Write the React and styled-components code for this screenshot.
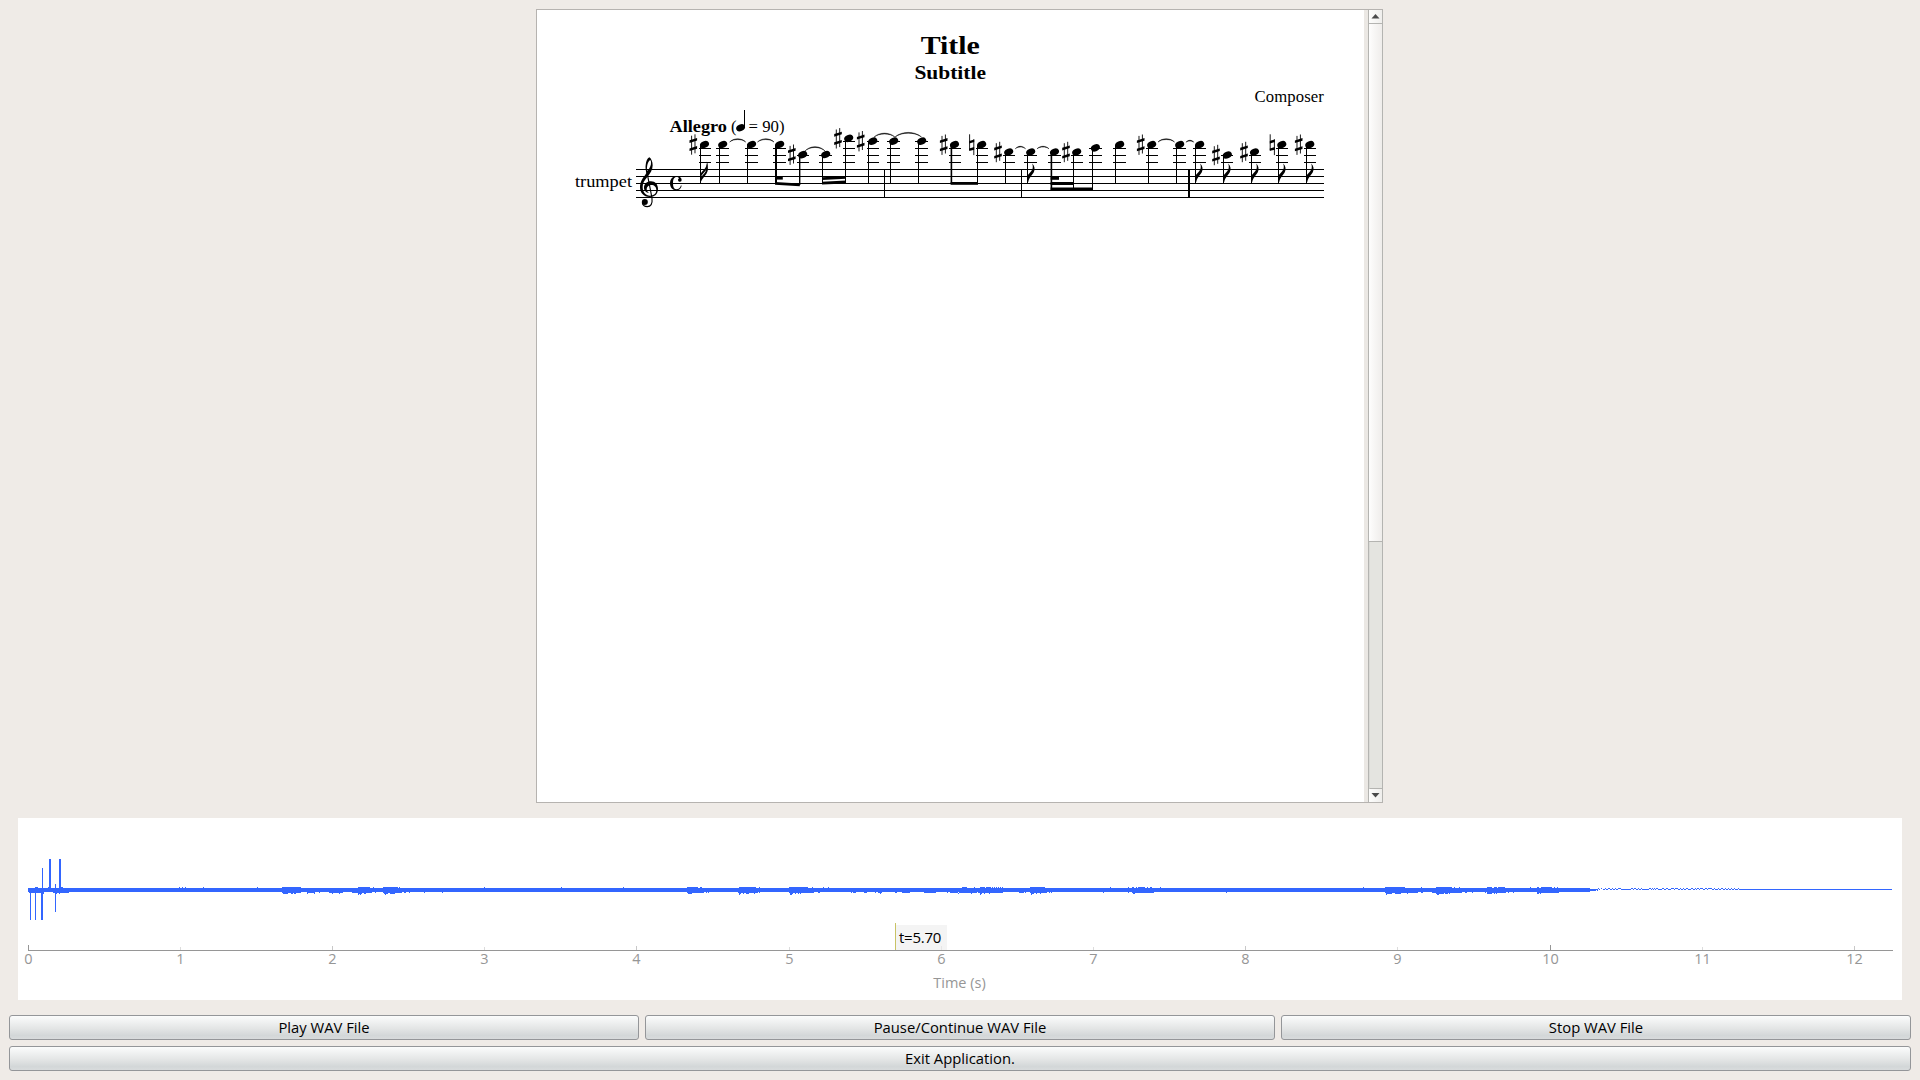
import React from "react";
import styled, { createGlobalStyle } from "styled-components";

const Global = createGlobalStyle`
  body { margin: 0; background: #efebe7; overflow: hidden; }
  * { box-sizing: border-box; }
`;

const ui = `"Open Sans", "Noto Sans", sans-serif`;
const serif = `"Liberation Serif", "Times New Roman", serif`;

const Window = styled.div`
  width: 1920px;
  height: 1080px;
  padding: 9px 9px 9px 9px;
  display: flex;
  flex-direction: column;
  align-items: center;
  background: #efebe7;
  font-family: ${ui};
`;

const ScrollArea = styled.div`
  width: 847px;
  height: 794px;
  margin-right: 1px;
  display: flex;
  border: 1px solid #b6b3b0;
  border-right: 0;
`;

const Sheet = styled.div`
  width: 827px;
  padding-top: 22px;
  background: #fff;
  display: flex;
  flex-direction: column;
  align-items: center;
  color: #000;
  font-family: ${serif};
`;

const Title = styled.h1`
  margin: 0;
  font-size: 26px;
  line-height: 28px;
  transform: translateX(-0.5px) scaleX(1.15);
`;

const Subtitle = styled.h2`
  margin: 1px 0 0;
  font-size: 19px;
  line-height: 24px;
  transform: translateX(-0.5px) scaleX(1.13);
`;

const Composer = styled.div`
  align-self: flex-end;
  margin: 2px 40px 0 0;
  font-size: 16.7px;
  line-height: 20px;
  letter-spacing: 0.1px;
`;

const Score = styled.svg`
  display: block;
  width: 827px;
  height: 110px;
`;

const Gap = styled.div`
  width: 4px;
  background: #ebe8e4;
`;

const ScrollBar = styled.div`
  width: 15px;
  border: solid #b4b4b1;
  border-width: 0 1px;
  display: flex;
  flex-direction: column;
  background: #e4e4e0;
`;

const Arrow = styled.div`
  height: 13px;
  display: flex;
  align-items: center;
  justify-content: center;
  background: linear-gradient(90deg, #fdfdfc, #efeeec);
`;

const Thumb = styled.div`
  height: 519px;
  border: solid #b4b4b1;
  border-width: 1px 0;
  background: linear-gradient(90deg, #fefefe, #f9f8f7 30%, #efedeb);
`;

const Track = styled.div`
  flex: 1;
  border-bottom: 1px solid #b4b4b1;
  border-left: 1px solid #dadad6;
`;

const Plot = styled.div`
  width: 1884px;
  height: 182px;
  margin-top: 15px;
  background: #fff;
  position: relative;
`;

const Chart = styled.svg`
  display: block;
  width: 1884px;
  height: 182px;
`;

const CursorTag = styled.div`
  position: absolute;
  left: 877px;
  top: 105px;
  width: 52px;
  height: 27px;
  display: flex;
  align-items: flex-end;
  border-left: 1px solid #c9c365;
`;

const CursorText = styled.span`
  width: 51px;
  height: 25px;
  padding-left: 3px;
  line-height: 25px;
  font-size: 15px;
  letter-spacing: -0.25px;
  color: #000;
  background: rgba(240, 240, 240, 0.75);
`;

const Buttons = styled.div`
  width: 1902px;
  margin-top: 15px;
  display: grid;
  grid-template-columns: repeat(3, 630px);
  gap: 6px;
`;

const Button = styled.button`
  height: 25px;
  padding: 0;
  grid-column: span ${(p) => p.$span || 1};
  border: 1px solid #949699;
  border-radius: 3px;
  background: linear-gradient(#fbfcfc, #e3e5e5 55%, #d3d7d8 85%, #d8dbdc);
  font-family: ${ui};
  font-size: 14.8px;
  line-height: 21px;
  color: #000;
`;

/* ---------- score ---------- */

const STAFF = [169, 176, 183, 190, 197];

const NOTES = [
  { x: 704.5, y: 144.5, stem: 700, acc: "#", ax: 693.3, flag: 2 },
  { x: 722.7, y: 144.5, stem: 719 },
  { x: 751.6, y: 144.5, stem: 747 },
  { x: 779.7, y: 144.5, stem: 775, w: 2 },
  { x: 802.7, y: 154.7, stem: 799, w: 1.4, acc: "#", ax: 791.8, end: 185 },
  { x: 825.7, y: 154.5, stem: 822, end: 184 },
  { x: 848.7, y: 138.3, stem: 845, acc: "#", ax: 838 },
  { x: 872.8, y: 141.2, stem: 868, acc: "#", ax: 860.7 },
  { x: 893.7, y: 141.2, stem: 890 },
  { x: 921.7, y: 141.2, stem: 918 },
  { x: 954.5, y: 144.7, stem: 950.6, w: 1.6, acc: "#", ax: 943.7 },
  { x: 981.7, y: 144.7, stem: 977, acc: "n", ax: 971.7 },
  { x: 1008.7, y: 152, stem: 1005, acc: "#", ax: 998 },
  { x: 1030.7, y: 152, stem: 1027, flag: 1 },
  { x: 1054.5, y: 152, stem: 1050.6, w: 1.6, end: 190 },
  { x: 1076.7, y: 152, stem: 1073, acc: "#", ax: 1066, end: 190 },
  { x: 1095.4, y: 147.8, stem: 1092, end: 190 },
  { x: 1119.7, y: 144.7, stem: 1115 },
  { x: 1151.7, y: 144.7, stem: 1148, acc: "#", ax: 1140.7 },
  { x: 1179.7, y: 144.7, stem: 1176 },
  { x: 1199.7, y: 144.7, stem: 1195, flag: 1 },
  { x: 1227.3, y: 155, stem: 1223, acc: "#", ax: 1216, flag: 1 },
  { x: 1254.5, y: 152, stem: 1251, acc: "#", ax: 1244, flag: 1 },
  { x: 1281.8, y: 144.7, stem: 1278, acc: "n", ax: 1272.3, flag: 1 },
  { x: 1309.8, y: 144.7, stem: 1306, acc: "#", ax: 1298.7, flag: 1 },
];

const TIES = [
  [729.7, 745.7, 142, 138.8],
  [757.5, 774, 142, 138.8],
  [804.5, 825.5, 151.5, 146.7],
  [874, 895, 137.2, 133.2],
  [895, 921.5, 137, 132.4],
  [1015.3, 1025.5, 148.8, 146.3],
  [1037, 1049, 148.8, 146.3],
  [1158, 1174.5, 142, 138.8],
  [1186, 1193.8, 142.2, 140.3],
];

const BEAMS = [
  "775,182 799.8,183.4 799.8,186.2 775,184.8",
  "775,177 782.8,177 782.8,179.6 775,179.6",
  "822,181.8 846,180.6 846,183.4 822,184.6",
  "822,177.2 846,176 846,178.8 822,180",
  "950.6,182 978,182 978,184.8 950.6,184.8",
  "1050.6,187.4 1093,187.4 1093,190.6 1050.6,190.6",
  "1050.6,182 1074,182 1074,185 1050.6,185",
  "1050.6,177 1059,177 1059,179.8 1050.6,179.8",
];

const Head = ({ x, y }) => (
  <ellipse cx={x} cy={y} rx="4.7" ry="3.4" transform={`rotate(-25 ${x} ${y})`} />
);

const Sharp = ({ x, y }) => (
  <g transform={`translate(${x} ${y})`}>
    <path d="M-1.7 -8.8V10.2M1.7 -10.2V8.8" stroke="#000" strokeWidth="0.9" />
    <path d="M-3.8 -4.2L3.8 -6.6V-4L-3.8 -1.6ZM-3.8 4L3.8 1.6V4.2L-3.8 6.6Z" />
  </g>
);

const Natural = ({ x, y }) => (
  <g transform={`translate(${x} ${y})`}>
    <path d="M-2.1 -10.4V5.4M2.1 -5.4V10.4" stroke="#000" strokeWidth="0.9" />
    <path d="M-2.5 -3.8L2.5 -5.2V-2.6L-2.5 -1.2ZM-2.5 3.8L2.5 2.4V5L-2.5 6.2Z" />
  </g>
);

const ledgersFor = (y) =>
  [141, 148, 155, 162].filter((l) => l > y - 2.2);

const FLAG =
  "M0.5 -7C1.5 -10.5 7.8 -12 5.2 -19.5C7.8 -17 8.2 -13.5 6.8 -10.8C5.2 -7.8 2.4 -6 1.2 -1H0.5Z";

const Note = ({ n }) => (
  <g>
    {ledgersFor(n.y).map((l) => (
      <rect
        key={l}
        x={Math.round(n.x - (n.acc ? 6 : 6.5))}
        y={l}
        width={n.acc ? 12 : 13}
        height="1"
        shapeRendering="crispEdges"
      />
    ))}
    <rect x={n.stem} y={n.y} width={n.w || 1} height={(n.end || 183.5) - n.y} />
    <Head x={n.x} y={n.y} />
    {n.acc === "#" && <Sharp x={n.ax} y={n.y} />}
    {n.acc === "n" && <Natural x={n.ax} y={n.y} />}
    {n.flag === 1 && <path d={FLAG} transform={`translate(${n.stem} 183)`} />}
    {n.flag === 2 && (
      <>
        <path
          d="M0.5 -2C1 -6 8 -8 6.6 -17C8.2 -14 8.6 -11 6.6 -7.6C4.8 -4.6 2.4 -3 0.8 1H0Z"
          transform={`translate(${n.stem} 181)`}
        />
        <path
          d="M0.5 -2C1 -5.5 7.6 -7.5 6.8 -15C8.2 -12.5 8.2 -9.600 6.4 -6.8C4.8 -4.6 2.4 -3 0.8 0.4H0Z"
          transform={`translate(${n.stem} 176.5)`}
        />
      </>
    )}
  </g>
);

const Tie = ({ t: [a, b, y, top] }) => {
  const k = y + ((top - y) * 4) / 3;
  const d = (b - a) * 0.25;
  return (
    <path
      d={`M${a} ${y}C${a + d} ${k} ${b - d} ${k} ${b} ${y}C${b - d} ${k + 1} ${a + d} ${k + 1} ${a} ${y}Z`}
      stroke="#000"
      strokeWidth="0.45"
    />
  );
};

const Clef = () => (
  <g transform="translate(560 90) scale(0.33333)">
    <path
      fillRule="evenodd"
      d="M268 202C273 205 278 214 278 226C278 240 271 251 262 261C253 271 248 279 248 291C248 306 257 317 270 317C281 317 289 311 289 300C289 291 283 285 274 285C266 285 260 290 260 297C260 302 263 306 268 309C258 308 252 301 252 293C252 282 261 274 273 274C286 274 294 284 294 297C294 312 284 321 269 321C251 321 240 308 240 292C240 276 247 265 256 254C258 251 259 250 259 249C257 240 256 232 257 225C258 213 262 205 268 202ZM270 211C264 215 260 226 261 244C269 236 274 226 273 217C273 213 272 211 270 211Z"
    />
    <path
      d="M260 240C263 262 273 304 276 326C278 342 272 350 262 350C254 350 248 345 247 338"
      fill="none"
      stroke="#000"
      strokeWidth="3.4"
    />
    <circle cx="254.500" cy="336" r="9" fill="#000" />
  </g>
);

const CommonTime = () => (
  <g transform="translate(560 90) scale(0.33333)">
    <path d="M365 287C363 296 357 301 349 301C337 301 330 292 330 280C330 267 338 259 350 259C359 259 365 264 365 270A5.500 5.500 0 1 1 357 265C356 262 353 261 350 261C342 261 339 268 339 280C339 292 342 298 350 298C356 298 361 294 363 286Z" />
  </g>
);

const ScoreLine = () => (
  <Score viewBox="537 107 827 110">
    <g fontFamily={serif} fill="#000">
      <text x="575" y="186.500" fontSize="17.500" textLength="57" lengthAdjust="spacingAndGlyphs">trumpet</text>
      <text x="669.500" y="131.500" fontSize="17" fontWeight="bold" textLength="57.500" lengthAdjust="spacingAndGlyphs">Allegro</text>
      <text x="731" y="131.500" fontSize="16.500">(</text>
      <text x="748.500" y="131.500" fontSize="16.500" textLength="36" lengthAdjust="spacingAndGlyphs">= 90)</text>
    </g>
    <ellipse cx="740.600" cy="127.800" rx="4.600" ry="3.300" transform="rotate(-25 740.6 127.8)" />
    <rect x="744" y="110" width="1" height="17" />
    <g shapeRendering="crispEdges">
      {STAFF.map((y) => (
        <rect key={y} x="636" y={y} width="688" height="1" />
      ))}
      <rect x="884" y="169" width="1" height="29" />
      <rect x="1021" y="169" width="1" height="29" />
      <rect x="1188" y="169" width="2" height="29" />
    </g>
    <Clef />
    <CommonTime />
    {NOTES.map((n) => (
      <Note key={n.x} n={n} />
    ))}
    {BEAMS.map((b) => (
      <polygon key={b} points={b} />
    ))}
    {TIES.map((t) => (
      <Tie key={t[0]} t={t} />
    ))}
  </Score>
);

/* ---------- waveform ---------- */

/* rows of pixel runs: [y, [start, end], ...] */
const RUNS = [
  [887, [35, 38], [48, 51], [59, 63], [179, 180], [182, 183], [185, 186], [203, 204], [257, 258],
    [282, 301], [358, 370], [373, 374], [383, 398], [399, 400], [484, 485], [561, 562], [623, 624],
    [687, 698], [700, 702], [739, 756], [759, 760], [789, 808], [812, 813], [823, 824], [828, 829],
    [962, 967], [974, 975], [980, 985], [986, 991], [992, 993], [994, 995], [996, 997], [998, 999],
    [1000, 1001], [1002, 1003], [1030, 1045], [1110, 1111], [1128, 1129], [1132, 1134], [1136, 1137],
    [1138, 1145], [1147, 1148], [1150, 1152], [1160, 1161], [1363, 1364], [1385, 1405], [1421, 1422],
    [1436, 1452], [1454, 1455], [1459, 1460], [1487, 1492], [1494, 1497], [1498, 1505], [1530, 1531],
    [1537, 1539], [1541, 1552], [1554, 1555], [1557, 1558]],
  [892, [29, 44], [53, 69], [282, 301], [307, 315], [319, 320], [329, 343], [352, 372], [375, 376],
    [383, 402], [404, 406], [409, 410], [424, 425], [442, 443], [687, 704], [706, 707], [708, 709],
    [738, 758], [759, 760], [789, 814], [818, 820], [851, 852], [853, 856], [864, 867], [875, 876],
    [878, 882], [895, 897], [902, 910], [924, 936], [947, 948], [950, 958], [959, 977], [978, 1003],
    [1019, 1024], [1025, 1026], [1030, 1047], [1049, 1050], [1051, 1052], [1103, 1104], [1128, 1129],
    [1132, 1154], [1226, 1227], [1385, 1418], [1421, 1423], [1432, 1462], [1465, 1467], [1472, 1473],
    [1485, 1486], [1487, 1506], [1508, 1509], [1513, 1514], [1537, 1559]],
  [893, [43, 44], [56, 57], [59, 60], [283, 288], [291, 293], [294, 296], [307, 308], [314, 315],
    [332, 333], [339, 340], [358, 362], [364, 366], [384, 388], [390, 395], [688, 692], [739, 741],
    [743, 744], [746, 749], [754, 755], [790, 793], [795, 796], [798, 799], [800, 801], [880, 881],
    [958, 959], [971, 972], [980, 982], [984, 985], [989, 990], [1031, 1034], [1036, 1037], [1040, 1041],
    [1133, 1135], [1386, 1392], [1395, 1401], [1407, 1408], [1436, 1444], [1445, 1448], [1449, 1450],
    [1487, 1492], [1494, 1495], [1496, 1497], [1537, 1539], [1540, 1541]],
  [894, [358, 359], [360, 361], [385, 386], [739, 740], [790, 792], [980, 981], [1031, 1032], [1386, 1387], [1437, 1439]],
  [888, [1598, 1599], [1601, 1602], [1605, 1606], [1608, 1610], [1612, 1613], [1615, 1616], [1618, 1621],
    [1631, 1633], [1634, 1636], [1638, 1639], [1641, 1642], [1649, 1651], [1652, 1653], [1654, 1655],
    [1656, 1658], [1662, 1664], [1666, 1668], [1671, 1674], [1675, 1678], [1680, 1681], [1683, 1684],
    [1686, 1688], [1691, 1693], [1695, 1696], [1697, 1699], [1700, 1703], [1705, 1707], [1708, 1712],
    [1714, 1715], [1718, 1719], [1721, 1723], [1725, 1726], [1728, 1729], [1731, 1732], [1734, 1735], [1738, 1739]],
  [889, [1590, 1598], [1599, 1600], [1603, 1605], [1606, 1608], [1610, 1612], [1613, 1615], [1616, 1618],
    [1621, 1631], [1633, 1634], [1636, 1638], [1639, 1641], [1642, 1649], [1651, 1652], [1653, 1654],
    [1655, 1656], [1658, 1662], [1664, 1666], [1668, 1671], [1674, 1675], [1678, 1680], [1681, 1683],
    [1684, 1686], [1688, 1691], [1693, 1695], [1696, 1697], [1699, 1700], [1703, 1705], [1707, 1708],
    [1712, 1714], [1715, 1718], [1719, 1721], [1723, 1725], [1726, 1728], [1729, 1731], [1732, 1734],
    [1735, 1738], [1739, 1892]],
  [890, [1590, 1596], [1597, 1598]],
];

const SPIKES = [
  [30, 891, 1, 29], [35, 891, 1, 29], [41, 891, 2, 29], [42, 868, 1, 22],
  [49, 859, 2, 30], [59, 859, 2, 30], [55, 884, 1, 28],
];

const tickX = (n) => 28 + Math.floor(n * 152.2);

const Wave = () => (
  <Chart viewBox="18 818 1884 182">
    <g shapeRendering="crispEdges" fill="#3366ff">
      <rect x="28" y="888" width="1562" height="4" />
      {SPIKES.map(([x, y, w, h]) => (
        <rect key={`${x}-${y}`} x={x} y={y} width={w} height={h} />
      ))}
      {RUNS.map(([y, ...runs]) =>
        runs.map(([a, b]) => <rect key={`${y}-${a}`} x={a} y={y} width={b - a} height="1" />)
      )}
    </g>
    <g shapeRendering="crispEdges">
      {Array.from({ length: 13 }, (_, n) => {
        const h = n % 10 === 0 ? 5 : n % 2 === 0 ? 4 : 3;
        const c = n % 10 === 0 ? "#969696" : n % 2 === 0 ? "#c8c8c8" : "#dcdcdc";
        return <rect key={n} x={tickX(n)} y={950 - h} width="1" height={h} fill={c} />;
      })}
      <rect x="28" y="950" width="1865" height="1" fill="#969696" />
    </g>
    <g fontFamily={ui} fontSize="14.500" fill="#969696" textAnchor="middle">
      {Array.from({ length: 13 }, (_, n) => (
        <text key={n} x={tickX(n) + 0.5} y="964">{n}</text>
      ))}
      <text x="959.500" y="988" textLength="52.500" lengthAdjust="spacingAndGlyphs">Time (s)</text>
    </g>
  </Chart>
);

export default function App() {
  return (
    <Window>
      <Global />
      <ScrollArea>
        <Sheet>
          <Title>Title</Title>
          <Subtitle>Subtitle</Subtitle>
          <Composer>Composer</Composer>
          <ScoreLine />
        </Sheet>
        <Gap />
        <ScrollBar>
          <Arrow>
            <svg width="9" height="5" viewBox="0 0 9 5"><path d="M4.500 0L8.500 4.500H0.500Z" fill="#4a4a4a" /></svg>
          </Arrow>
          <Thumb />
          <Track />
          <Arrow>
            <svg width="9" height="5" viewBox="0 0 9 5"><path d="M4.500 4.500L0.500 0H8.500Z" fill="#4a4a4a" /></svg>
          </Arrow>
        </ScrollBar>
      </ScrollArea>
      <Plot>
        <Wave />
        <CursorTag>
          <CursorText>t=5.70</CursorText>
        </CursorTag>
      </Plot>
      <Buttons>
        <Button>Play WAV File</Button>
        <Button>Pause/Continue WAV File</Button>
        <Button>Stop WAV File</Button>
        <Button $span={3}>Exit Application.</Button>
      </Buttons>
    </Window>
  );
}
